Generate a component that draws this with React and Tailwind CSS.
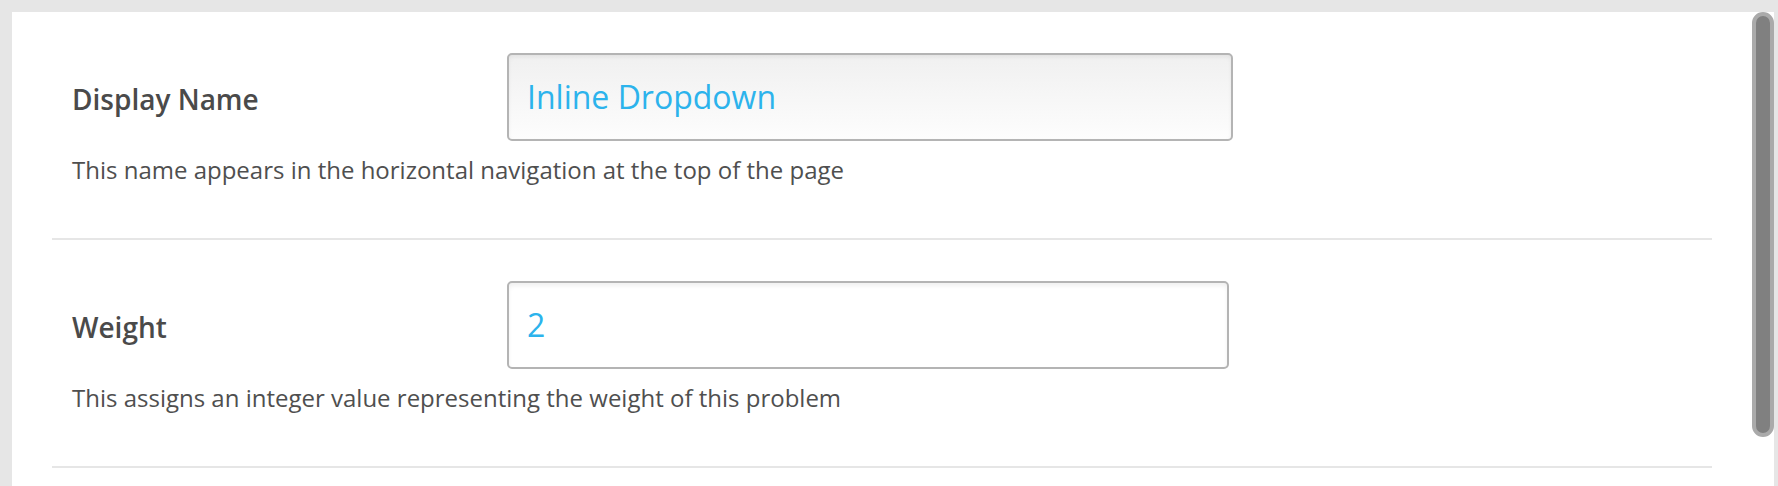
import React from "react";

const rows = [
  {
    label: "Display Name",
    value: "Inline Dropdown",
    help: "This name appears in the horizontal navigation at the top of the page",
    width: "w-[726px]",
    tinted: true,
  },
  {
    label: "Weight",
    value: "2",
    help: "This assigns an integer value representing the weight of this problem",
    width: "w-[722px]",
    tinted: false,
  },
];

function SettingRow({ label, value, help, width, tinted }) {
  return (
    <div className="border-b-2 border-[#e6e6e6] pt-[41px] pb-[50px] pl-[20px]">
      <div className="flex items-center h-[88px]">
        <label className="w-[435px] pt-[4px] text-[28px] font-semibold text-[#4a4a4a]">
          {label}
        </label>
        <input
          type="text"
          readOnly
          defaultValue={value}
          className={
            tinted
              ? `${width} h-[88px] pl-[18px] pr-4 pb-[2px] text-[32px] text-[#2cb3ec] border-2 border-[#b4b4b4] rounded-[5px] outline-none bg-linear-to-b from-[#f0f0f0] to-[#fdfdfd] shadow-[inset_0_2px_4px_rgba(0,0,0,0.06)]`
              : `${width} h-[88px] pl-[18px] pr-4 pb-[2px] text-[32px] text-[#2cb3ec] border-2 border-[#b4b4b4] rounded-[5px] outline-none bg-white shadow-[inset_0_3px_4px_rgba(0,0,0,0.06)]`
          }
        />
      </div>
      <p className="mt-[11px] text-[24px] leading-9 text-[#4f4f4f]">{help}</p>
    </div>
  );
}

export default function App() {
  return (
    <div
      className="h-[486px] overflow-hidden bg-[#e6e6e6] pt-[12px] pl-[12px] pr-[4px]"
      style={{ fontFamily: '"Open Sans", "Noto Sans", sans-serif' }}
    >
      <div className="flex h-full bg-white">
        <div className="flex-1 px-10">
          {rows.map((row) => (
            <SettingRow key={row.label} {...row} />
          ))}
        </div>
        <div className="w-[22px]">
          <div className="h-[425px] rounded-full border-4 border-[#aaaaaa] bg-[#808080]" />
        </div>
      </div>
    </div>
  );
}
